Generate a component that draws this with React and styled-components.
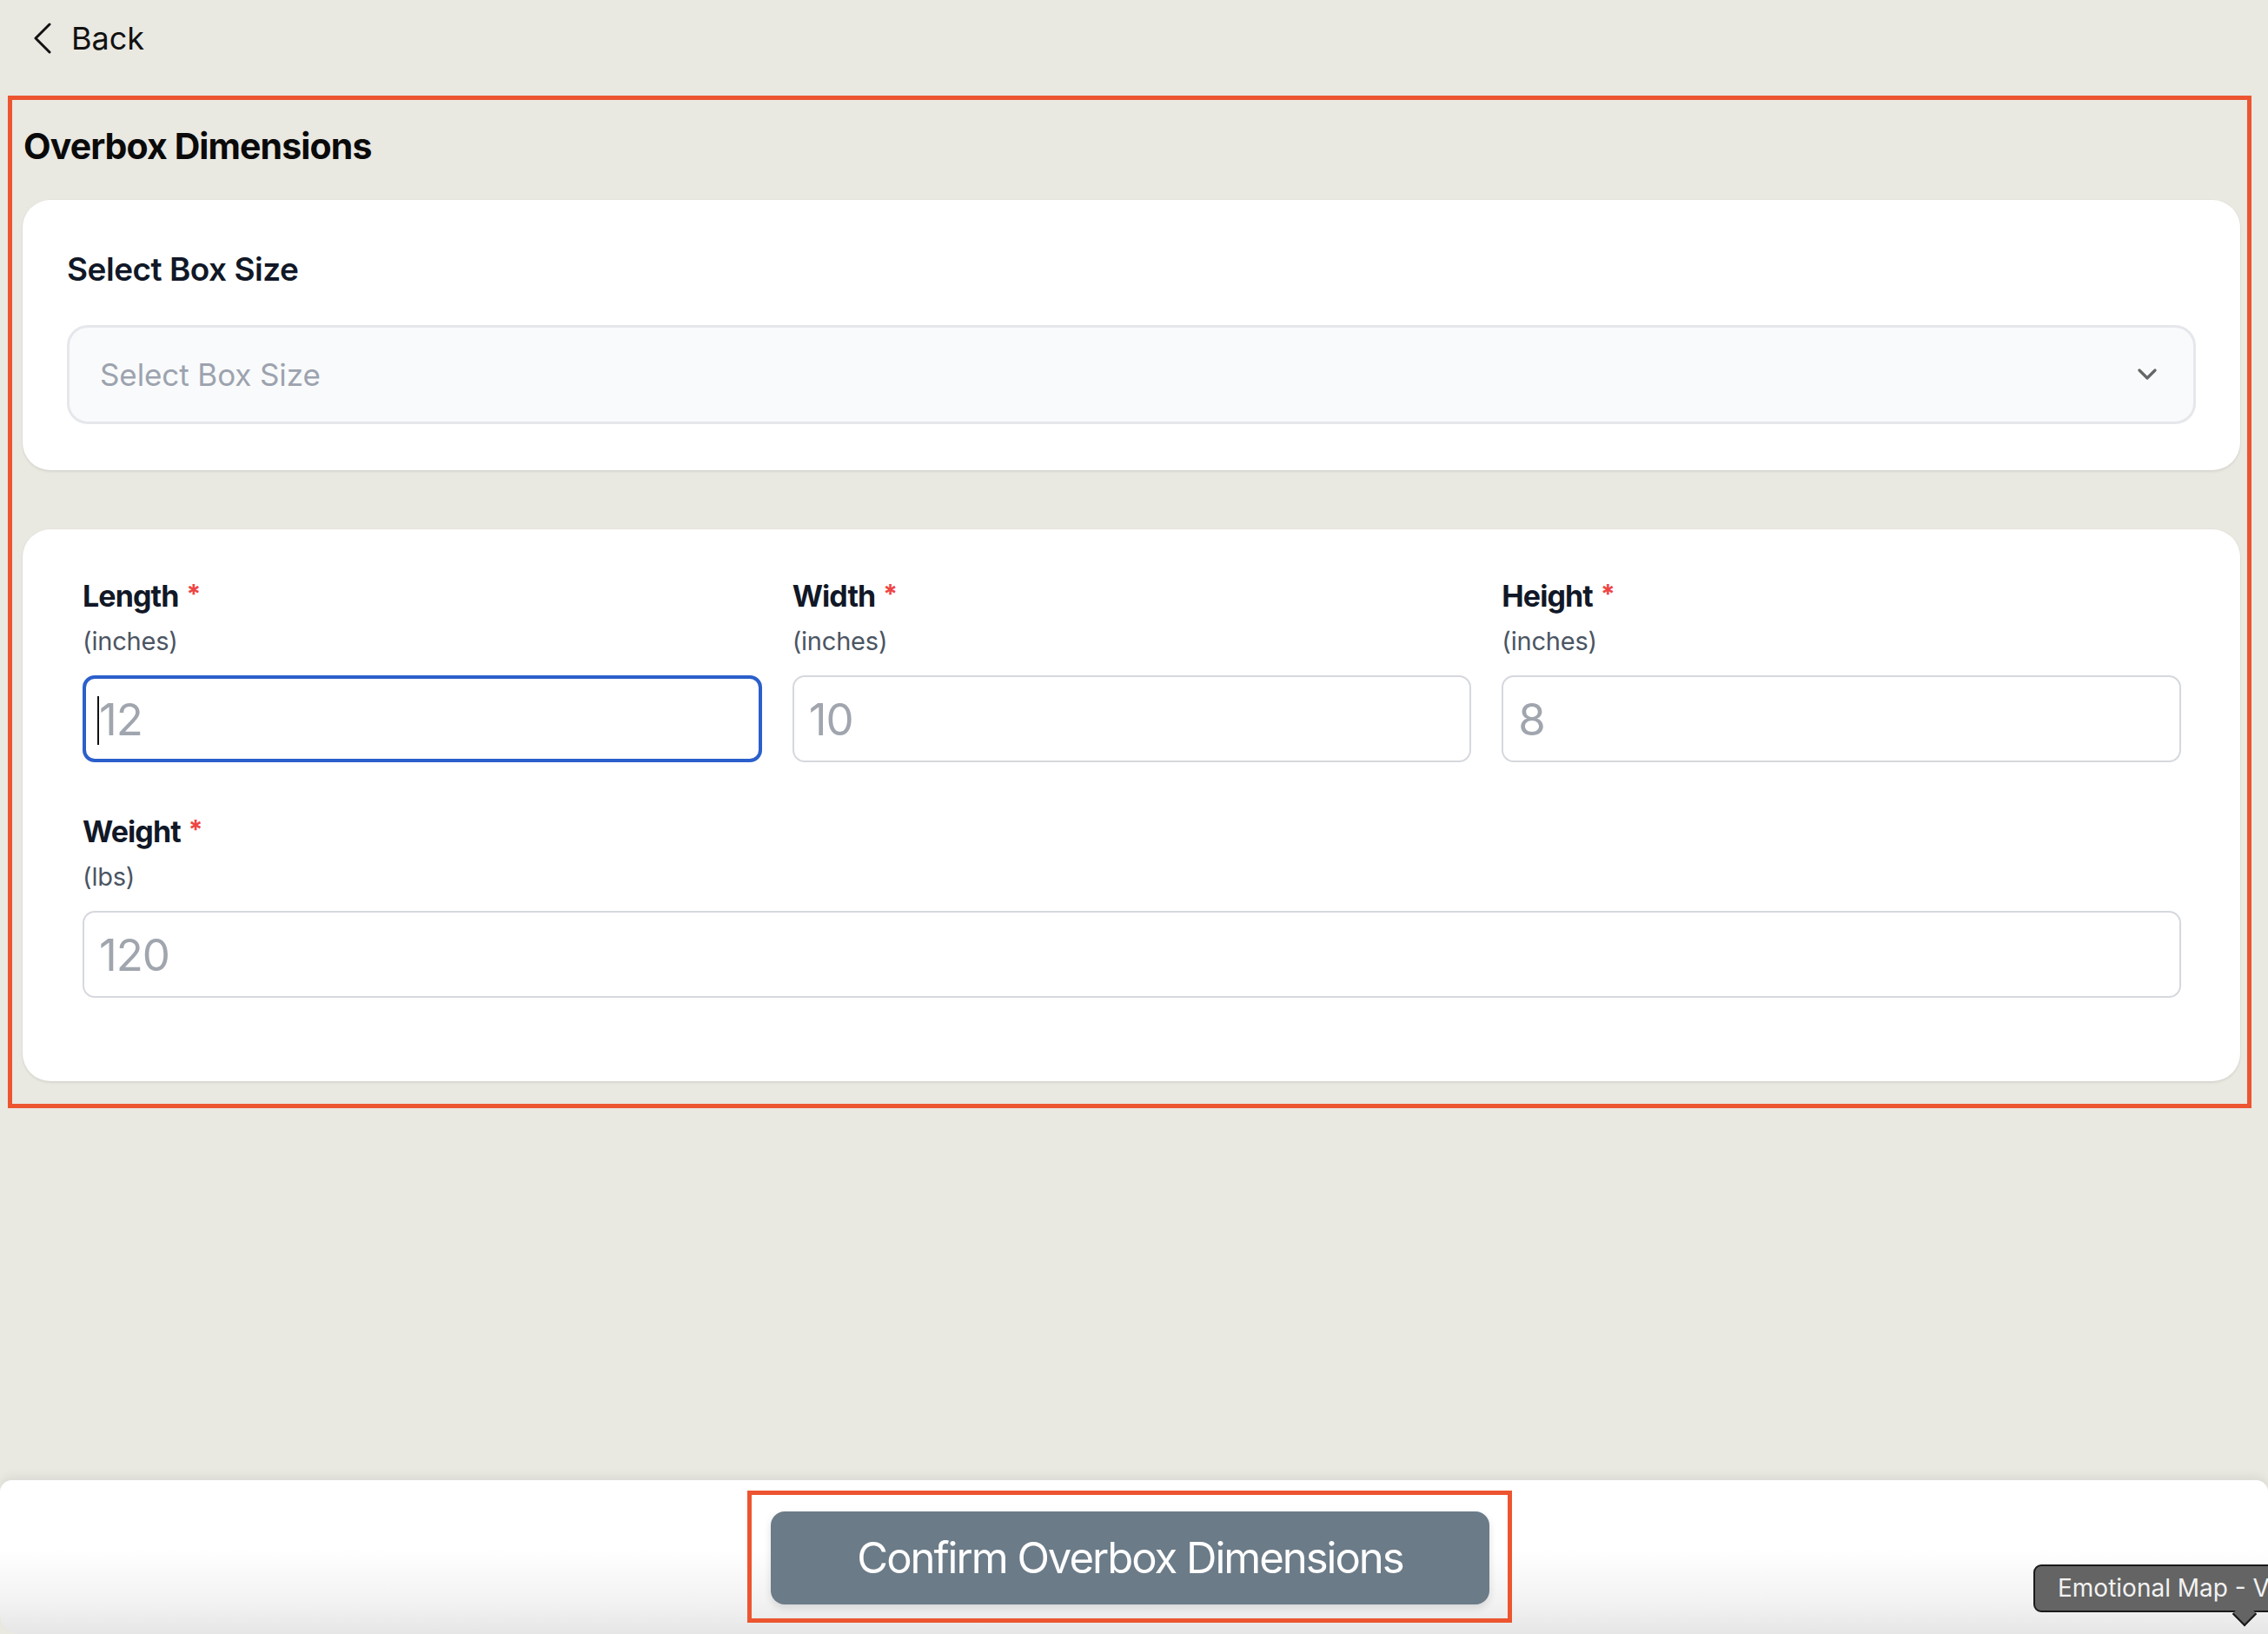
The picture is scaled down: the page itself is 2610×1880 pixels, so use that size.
import React from "react";
import styled, { createGlobalStyle } from "styled-components";

const Global = createGlobalStyle`
  html, body { margin: 0; padding: 0; }
  body {
    background: #e9e8e1;
    font-family: Inter, "Noto Sans", "Liberation Sans", sans-serif;
    overflow: hidden;
  }
  * { box-sizing: border-box; }
`;

const Page = styled.div`
  height: 100vh;
  display: flex;
  flex-direction: column;
  background: #e9e8e1;
  overflow: hidden;
`;

const TopBar = styled.div`
  height: 110px;
  display: flex;
  align-items: flex-start;
  padding: 22px 0 0 38px;
`;

const BackButton = styled.button`
  display: flex;
  align-items: center;
  gap: 22px;
  background: none;
  border: none;
  padding: 0;
  font-family: inherit;
  font-size: 36px;
  color: #111;
  cursor: pointer;
  line-height: 44px;
`;

const Highlight = styled.section`
  margin: 0 19px 0 9px;
  border: 5px solid #ec5530;
  padding: 29px 8px 26px 12px;
  display: flex;
  flex-direction: column;
`;

const Title = styled.h1`
  margin: 0 0 37px 1px;
  font-size: 41px;
  line-height: 49px;
  font-weight: 700;
  color: #0a0a0a;
  letter-spacing: -0.9px;
`;

const Card = styled.div`
  background: #fff;
  border-radius: 32px;
  box-shadow: 0 2px 3px rgba(0, 0, 0, 0.07), 0 0 0 1px rgba(0, 0, 0, 0.02);
  padding: ${(p) => p.$pad};
  & + & {
    margin-top: 68px;
  }
`;

const SectionLabel = styled.div`
  font-size: 37px;
  line-height: 55px;
  font-weight: 600;
  color: #111827;
  margin-bottom: 37px;
  letter-spacing: -0.5px;
`;

const SelectBox = styled.div`
  height: 114px;
  border: 3px solid #e5e7eb;
  background: #f9fafb;
  border-radius: 24px;
  display: flex;
  align-items: center;
  justify-content: space-between;
  padding: 0 42px 0 35px;
`;

const SelectPlaceholder = styled.span`
  font-size: 35px;
  color: #9ca3af;
  letter-spacing: -0.1px;
`;

const FieldGrid = styled.div`
  display: grid;
  grid-template-columns: repeat(3, 1fr);
  column-gap: 35px;
  row-gap: 52px;
`;

const Field = styled.div`
  display: flex;
  flex-direction: column;
  grid-column: ${(p) => (p.$full ? "1 / -1" : "auto")};
`;

const Label = styled.label`
  font-size: 34px;
  line-height: 51px;
  font-weight: 700;
  color: #111827;
  margin-bottom: 5px;
  letter-spacing: -0.9px;
`;

const Required = styled.span`
  color: #ef4444;
  margin-left: 9px;
  font-size: 30px;
  vertical-align: 4px;
`;

const Unit = styled.div`
  font-size: 29px;
  line-height: 44px;
  color: #4b5563;
  margin-bottom: 17px;
  letter-spacing: -0.2px;
`;

const InputWrap = styled.div`
  position: relative;
`;

const Input = styled.input`
  width: 100%;
  height: 100px;
  border: ${(p) => (p.$focused ? "4px solid #2b5fcb" : "2px solid #d5d8dd")};
  border-radius: 14px;
  padding: 0 0 0 ${(p) => (p.$focused ? "15px" : "17px")};
  font-family: inherit;
  font-size: 51px;
  color: #111827;
  background: #fff;
  outline: none;
  letter-spacing: -1px;
  &::placeholder {
    color: #a0a5ae;
  }
`;

const Caret = styled.span`
  position: absolute;
  left: 17px;
  top: 24px;
  width: 2px;
  height: 56px;
  background: #111;
`;

const Spacer = styled.div`
  flex: 1;
`;

const Footer = styled.footer`
  position: relative;
  height: 177px;
  border-radius: 14px 14px 0 22px;
  background: linear-gradient(#ffffff 0%, #ffffff 45%, #f2f2f2 80%, #e6e6e6 100%);
  box-shadow: 0 -6px 10px rgba(0, 0, 0, 0.05);
  display: flex;
  justify-content: center;
  align-items: flex-start;
  padding: 12px 10px 0 0;
`;

const ButtonFrame = styled.div`
  border: 5px solid #ec5530;
  padding: 19px 21px 16px 22px;
`;

const ConfirmButton = styled.button`
  width: 827px;
  height: 107px;
  border: none;
  border-radius: 16px;
  background: #6b7b88;
  color: #fff;
  font-family: inherit;
  font-size: 49px;
  letter-spacing: -2px;
  box-shadow: 0 4px 10px rgba(0, 0, 0, 0.12);
  cursor: pointer;
`;

const Tooltip = styled.div`
  position: absolute;
  left: 2340px;
  top: 97px;
  height: 55px;
  padding: 0 30px 0 26px;
  background: #646464;
  border: 2px solid #1a1a1a;
  border-radius: 9px;
  color: #f2f2f2;
  font-size: 28px;
  line-height: 51px;
  white-space: nowrap;
  &::after {
    content: "";
    position: absolute;
    left: 231px;
    bottom: -14px;
    width: 18px;
    height: 18px;
    background: #646464;
    border-right: 2px solid #1a1a1a;
    border-bottom: 2px solid #1a1a1a;
    transform: rotate(45deg);
  }
`;

const fields = [
  { name: "Length", unit: "(inches)", ph: "12", focused: true },
  { name: "Width", unit: "(inches)", ph: "10" },
  { name: "Height", unit: "(inches)", ph: "8" },
  { name: "Weight", unit: "(lbs)", ph: "120", full: true },
];

export default function App() {
  return (
    <Page>
      <Global />
      <TopBar>
        <BackButton>
          <svg width="22" height="36" viewBox="0 0 22 36" fill="none">
            <path d="M19 2 L3 18 L19 34" stroke="#111" strokeWidth="3" strokeLinecap="round" strokeLinejoin="round" />
          </svg>
          Back
        </BackButton>
      </TopBar>
      <Highlight>
        <Title>Overbox Dimensions</Title>
        <Card $pad="52px 51px 53px 51px">
          <SectionLabel>Select Box Size</SectionLabel>
          <SelectBox>
            <SelectPlaceholder>Select Box Size</SelectPlaceholder>
            <svg width="22" height="14" viewBox="0 0 22 14" fill="none">
              <path d="M2 2 L11 11 L20 2" stroke="#666" strokeWidth="3.2" strokeLinecap="round" strokeLinejoin="round" />
            </svg>
          </SelectBox>
        </Card>
        <Card $pad="49px 68px 96px 69px">
          <FieldGrid>
            {fields.map((f) => (
              <Field key={f.name} $full={f.full}>
                <Label>
                  {f.name}
                  <Required>*</Required>
                </Label>
                <Unit>{f.unit}</Unit>
                <InputWrap>
                  <Input placeholder={f.ph} $focused={f.focused} readOnly />
                  {f.focused && <Caret />}
                </InputWrap>
              </Field>
            ))}
          </FieldGrid>
        </Card>
      </Highlight>
      <Spacer />
      <Footer>
        <ButtonFrame>
          <ConfirmButton>Confirm Overbox Dimensions</ConfirmButton>
        </ButtonFrame>
        <Tooltip>Emotional Map - Vs</Tooltip>
      </Footer>
    </Page>
  );
}
